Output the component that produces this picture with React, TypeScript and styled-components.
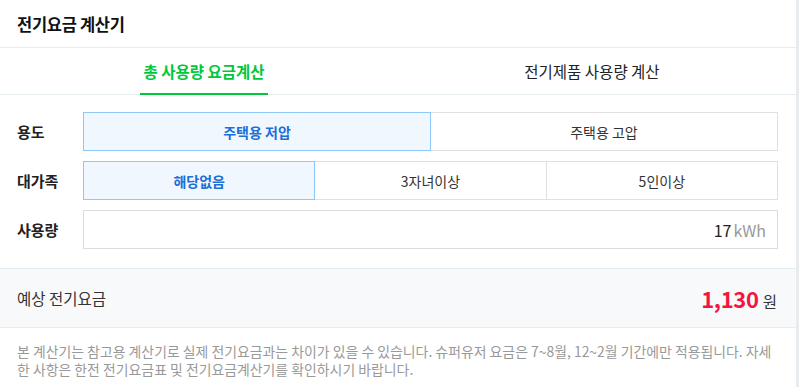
import styled, { createGlobalStyle } from 'styled-components';

const GlobalStyle = createGlobalStyle`
  body {
    margin: 0;
    background: #fff;
    font-family: "Noto Sans CJK KR", "Noto Sans", sans-serif;
  }
`;

const Card = styled.div`
  width: 796px;
  border-right: 3px solid #e9ecef;
  background: #fff;
  color: #222;
`;

const Header = styled.div`
  height: 47px;
  display: flex;
  align-items: center;
  padding-left: 17px;
  border-bottom: 1px solid #e6edf1;
`;

const Title = styled.h1`
  margin: 0;
  font-size: 16.5px;
  font-weight: 700;
  letter-spacing: -0.3px;
  color: #111;
`;

const Tabs = styled.div`
  display: flex;
  height: 46px;
  padding: 0 10px;
  border-bottom: 1px solid #e6edf1;
`;

const Tab = styled.div`
  flex: 1;
  display: flex;
  justify-content: center;
`;

const TabLabel = styled.span<{ $active?: boolean }>`
  display: flex;
  align-items: center;
  padding: 0 3px;
  font-size: 15.5px;
  font-weight: ${(p) => (p.$active ? 700 : 400)};
  color: ${(p) => (p.$active ? '#00c73c' : '#222')};
  border-bottom: 2px solid ${(p) => (p.$active ? '#00c73c' : 'transparent')};
  margin-bottom: -1px;
`;

const Form = styled.div`
  display: flex;
  flex-direction: column;
  gap: 10px;
  padding: 17px 18px 19px 17px;
`;

const Row = styled.div`
  display: flex;
  align-items: center;
  height: 39px;
`;

const Label = styled.div`
  width: 66px;
  font-size: 15px;
  font-weight: 700;
  color: #222;
`;

const Segments = styled.div`
  flex: 1;
  display: flex;
  height: 100%;
`;

const Segment = styled.button<{ $selected?: boolean }>`
  position: relative;
  flex: 1;
  margin: 0 0 0 -1px;
  padding: 0;
  font-family: inherit;
  font-size: 14px;
  font-weight: ${(p) => (p.$selected ? 700 : 400)};
  color: ${(p) => (p.$selected ? '#1b6fd6' : '#333')};
  background: ${(p) => (p.$selected ? '#f0f7fe' : '#fff')};
  border: 1px solid ${(p) => (p.$selected ? '#8ec8fb' : '#e0e0e0')};
  z-index: ${(p) => (p.$selected ? 1 : 0)};
  &:first-child {
    margin-left: 0;
  }
`;

const InputBox = styled.div`
  flex: 1;
  height: 100%;
  box-sizing: border-box;
  border: 1px solid #dcdcdc;
  display: flex;
  align-items: center;
  justify-content: flex-end;
  gap: 2px;
  padding-right: 11px;
`;

const Value = styled.span`
  font-size: 16px;
  color: #222;
`;

const Unit = styled.span`
  font-size: 16px;
  color: #999;
`;

const Result = styled.div`
  height: 58px;
  display: flex;
  align-items: center;
  justify-content: space-between;
  padding: 0 19px 0 17px;
  background: #f8f9fb;
  border-top: 1px solid #e6edf1;
  border-bottom: 1px solid #e6edf1;
`;

const ResultLabel = styled.span`
  font-size: 15.5px;
  color: #333;
`;

const Amount = styled.div`
  display: flex;
  align-items: baseline;
  gap: 4px;
`;

const Price = styled.strong`
  font-size: 22px;
  font-weight: 700;
  color: #f5143f;
  letter-spacing: -0.3px;
`;

const Won = styled.span`
  font-size: 15.5px;
  color: #333;
`;

const Notice = styled.p`
  margin: 0;
  padding: 14px 18px 14px 17px;
  font-size: 13.9px;
  line-height: 18px;
  color: #999;
`;

function App() {
  return (
    <>
      <GlobalStyle />
      <Card>
        <Header>
          <Title>전기요금 계산기</Title>
        </Header>
        <Tabs>
          <Tab>
            <TabLabel $active>총 사용량 요금계산</TabLabel>
          </Tab>
          <Tab>
            <TabLabel>전기제품 사용량 계산</TabLabel>
          </Tab>
        </Tabs>
        <Form>
          <Row>
            <Label>용도</Label>
            <Segments>
              <Segment $selected>주택용 저압</Segment>
              <Segment>주택용 고압</Segment>
            </Segments>
          </Row>
          <Row>
            <Label>대가족</Label>
            <Segments>
              <Segment $selected>해당없음</Segment>
              <Segment>3자녀이상</Segment>
              <Segment>5인이상</Segment>
            </Segments>
          </Row>
          <Row>
            <Label>사용량</Label>
            <InputBox>
              <Value>17</Value>
              <Unit>kWh</Unit>
            </InputBox>
          </Row>
        </Form>
        <Result>
          <ResultLabel>예상 전기요금</ResultLabel>
          <Amount>
            <Price>1,130</Price>
            <Won>원</Won>
          </Amount>
        </Result>
        <Notice>
          본 계산기는 참고용 계산기로 실제 전기요금과는 차이가 있을 수 있습니다. 슈퍼유저 요금은 7~8월, 12~2월 기간에만 적용됩니다. 자세한 사항은 한전 전기요금표 및 전기요금계산기를 확인하시기 바랍니다.
        </Notice>
      </Card>
    </>
  );
}

export default App;
